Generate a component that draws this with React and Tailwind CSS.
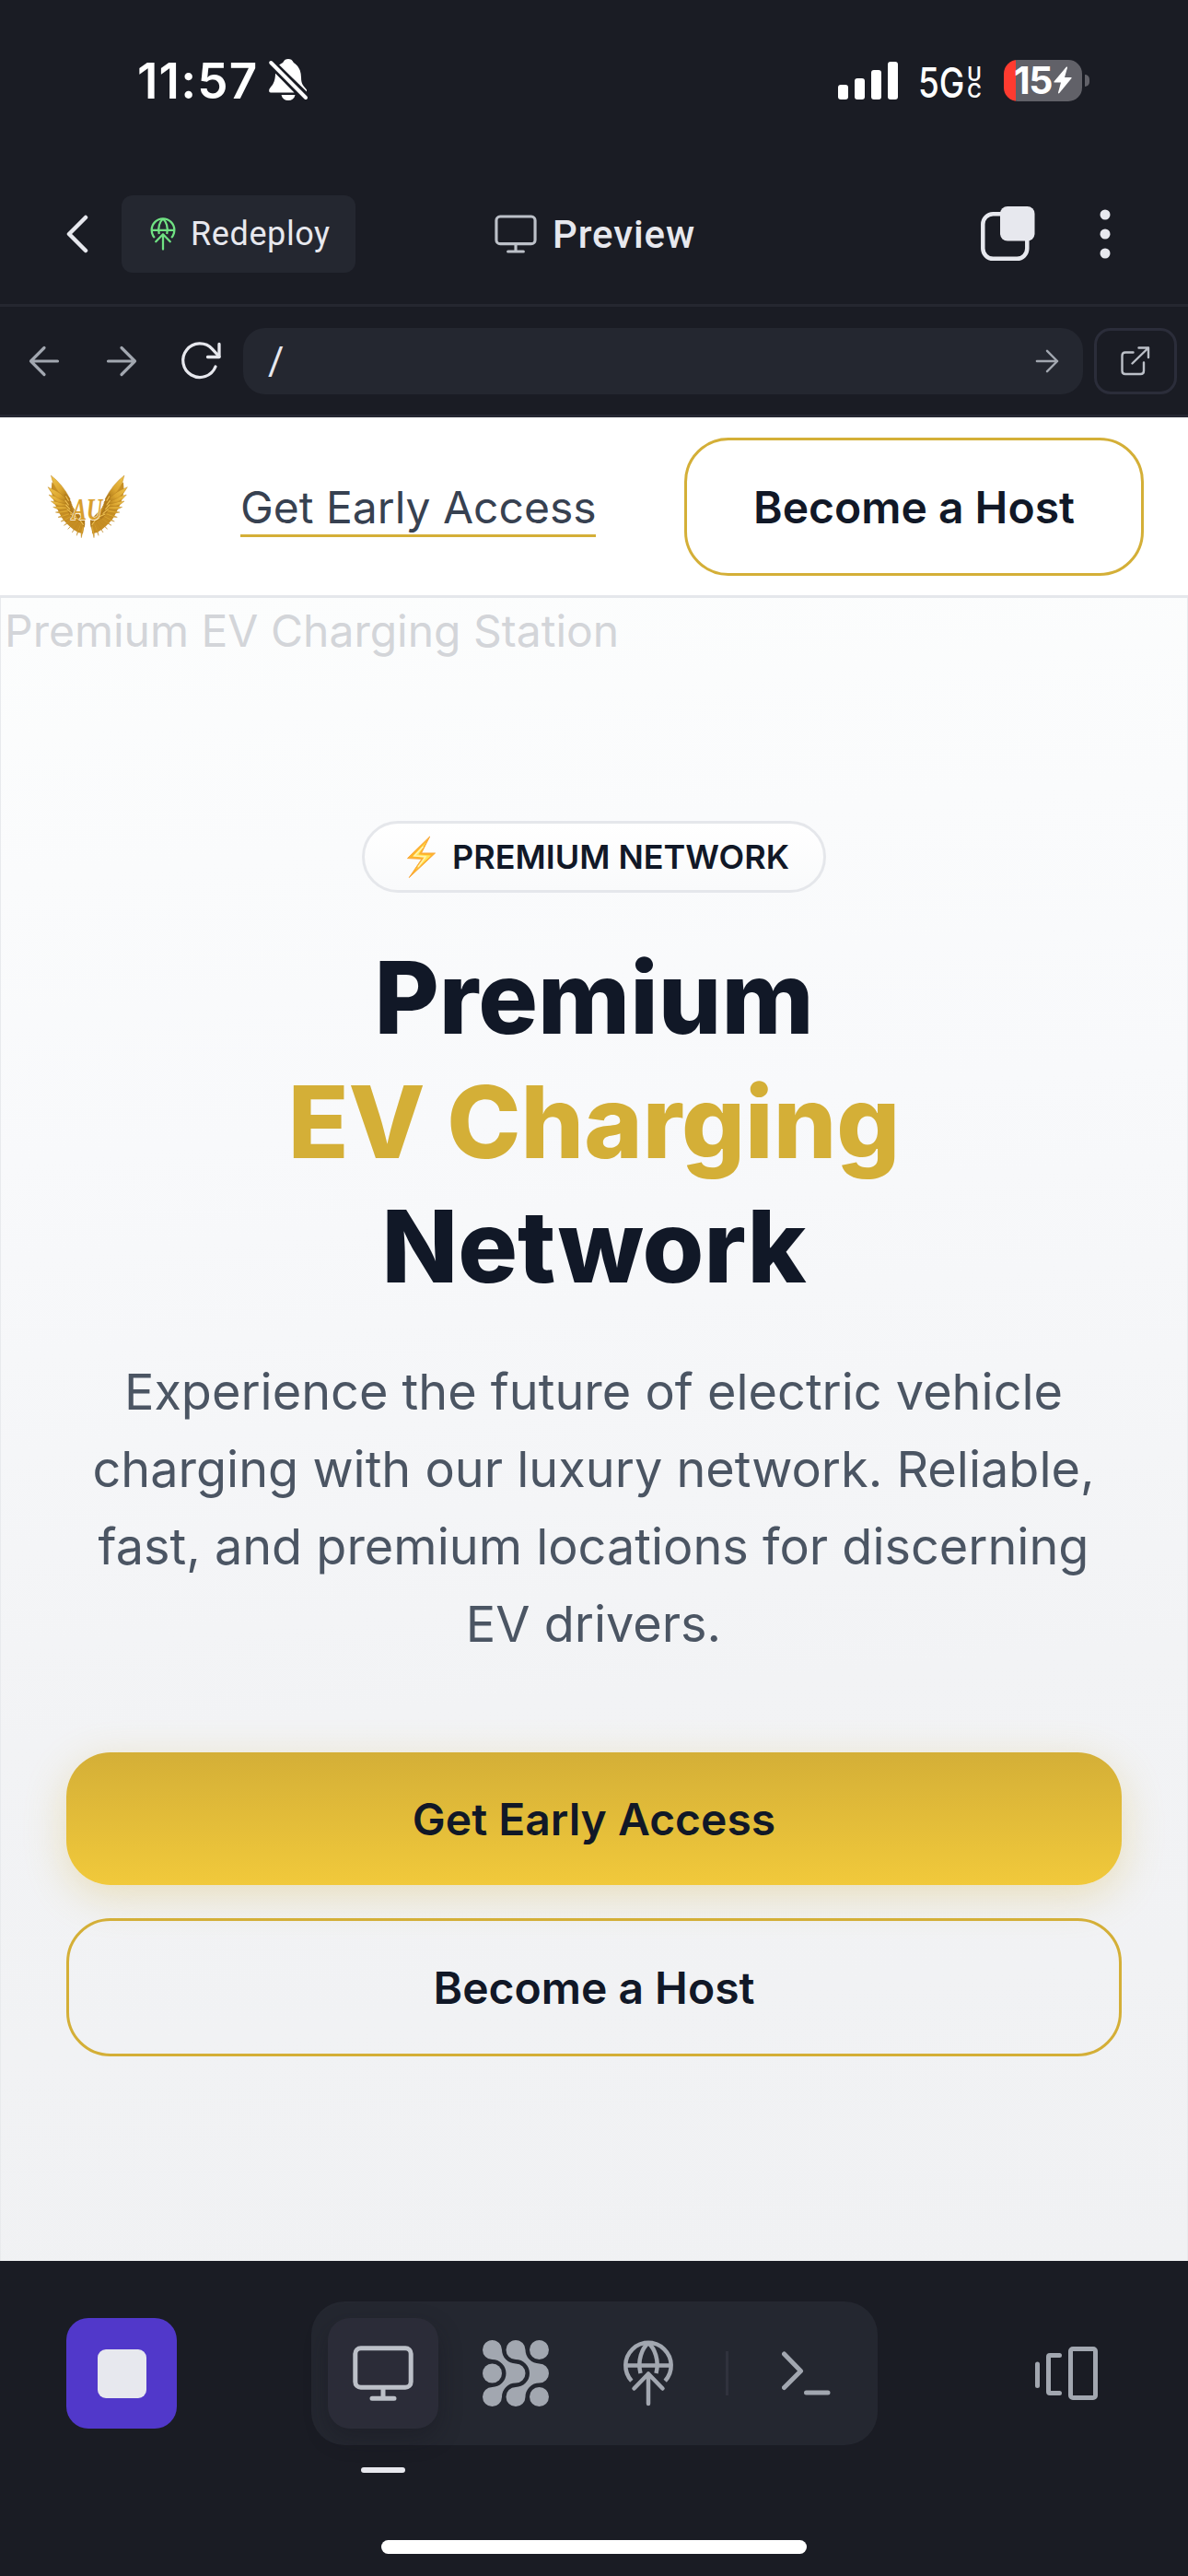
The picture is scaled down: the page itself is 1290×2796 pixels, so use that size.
import React from "react";

const INTER = "font-['Inter','Liberation_Sans',sans-serif]";
const UI = "font-['Roboto','Liberation_Sans',sans-serif]";

function BellOff() {
  return (
    <svg width="44" height="48" viewBox="0 0 44 48" fill="#fff" className="shrink-0">
      <path d="M12 7.5C14.5 6 15.500 5.500 16.500 4.500C17.500 2 19.500 1 22 1C24.500 1 26.500 2 27.500 4.500C28.500 6 36 9 36 21C36 29 39 30.500 42 34.500V36.500Z" />
      <path d="M8 16.500L28.500 37.500H3C1.500 37.500 1 36.500 1.200 35C1.800 31 8 29.500 8 16.500Z" />
      <path d="M14.500 40H29.500C28.500 44 26 46 22 46C18 46 15.500 44 14.500 40Z" />
      <path d="M3.200 5L41 43" stroke="#1a1c24" strokeWidth="9" />
      <path d="M3.200 5L41 43" stroke="#fff" strokeWidth="4" strokeLinecap="round" />
    </svg>
  );
}

function StatusBar() {
  return (
    <div className={`${INTER} flex h-[178px] shrink-0 items-center justify-between pl-[149px] pr-[107px] pb-[4px] text-white`}>
      <div className="flex items-center">
        <span className="w-[142px] whitespace-nowrap pt-[2px] text-[53px] font-semibold leading-none tracking-[1.200px]">11:57</span>
        <BellOff />
      </div>
      <div className="flex items-center">
        <div className="flex h-[41px] items-end gap-[7px]">
          <i className="h-[16px] w-[11px] rounded-[3px] bg-white" />
          <i className="h-[23px] w-[11px] rounded-[3px] bg-white" />
          <i className="h-[32px] w-[11px] rounded-[3px] bg-white" />
          <i className="h-[41px] w-[11px] rounded-[3px] bg-white" />
        </div>
        <div className="ml-[22px] flex h-[45px] w-[93px] items-center">
          <span className="w-[53px] origin-left scale-x-[0.82] whitespace-nowrap pt-[4px] text-[45px] font-medium leading-none">5G</span>
          <span className="w-[16px] pt-[5px] text-center text-[21px] font-semibold leading-[18px]">
            U<br />C
          </span>
        </div>
        <div className="flex h-[45px] w-[85px] items-center justify-center gap-[2px] rounded-[15px] bg-[linear-gradient(to_right,#ff3b30_13px,#616168_13px)]">
          <span className="text-[41px] font-bold leading-none tracking-[-1.500px]">15</span>
          <svg width="20" height="30" viewBox="0 0 20 30" fill="#fff">
            <path d="M14 0.500L0.500 16.500Q0 17.500 1 17.500H8L5 28.500Q5 30 6.300 29L19.500 13Q20 12 19 12H12L15 1.500Q15.200 0 14 0.500Z" />
          </svg>
        </div>
        <i className="ml-[3px] h-[13px] w-[5px] rounded-r-full bg-[#616168]" />
      </div>
    </div>
  );
}

function GlobeUp({ width, height, color, stroke }) {
  return (
    <svg width={width} height={height} viewBox="0 0 56 72" fill="none" stroke={color} strokeWidth={stroke} strokeLinecap="round" strokeLinejoin="round">
      <path strokeLinecap="butt" d="M9.800 44.200A24.700 24.700 0 1 1 46.200 44.200M3.300 27.500H52.700" />
      <path strokeLinecap="butt" d="M28 3C21 9 16 22 19.500 36M28 3C35 9 40 22 36.500 36" />
      <path d="M28 69V36.500M12.500 52.500L28 36.500L43.500 52.500" />
    </svg>
  );
}

function Monitor({ width, height, color, stroke }) {
  return (
    <svg width={width} height={height} viewBox="0 0 66 60" fill="none" stroke={color} strokeWidth={stroke} strokeLinecap="round" strokeLinejoin="round">
      <rect x="2.800" y="2.800" width="60.400" height="42.500" rx="6" />
      <path d="M33 46V57.200M21 57.200H45" />
    </svg>
  );
}

function Header() {
  return (
    <div className={`${UI} flex h-[155px] shrink-0 items-center border-b-[3px] border-[#252730] pl-[72px] text-[#e7e8ee]`}>
      <svg width="24" height="42" viewBox="0 0 24 42" fill="none" stroke="#e7e8ee" strokeWidth="4.500" strokeLinecap="round" strokeLinejoin="round">
        <path d="M21 3L3 21L21 39" />
      </svg>
      <button className="ml-[36px] flex h-[84px] w-[254px] items-center rounded-[12px] bg-[#242730] pl-[31px]">
        <GlobeUp width={28} height={36} color="#70e283" stroke={4.5} />
        <span className="ml-[16px] text-[36px] leading-none tracking-[0.600px]">Redeploy</span>
      </button>
      <div className="ml-[151px] flex items-center">
        <Monitor width={46} height={42} color="#bcc0c8" stroke={4.5} />
        <span className="ml-[17px] w-[156px] whitespace-nowrap pt-[2px] text-[42px] font-medium leading-none tracking-[0.900px]">Preview</span>
      </div>
      <svg className="ml-[309px]" width="60" height="60" viewBox="0 0 60 60">
        <rect x="2.300" y="8.300" width="48" height="48.500" rx="11" fill="none" stroke="#e7e8ee" strokeWidth="4.500" />
        <rect x="21" y="0" width="37.500" height="37.500" rx="8" fill="#e7e8ee" />
      </svg>
      <svg className="ml-[69px]" width="12" height="54" viewBox="0 0 12 54" fill="#e7e8ee">
        <circle cx="6" cy="6" r="5.500" />
        <circle cx="6" cy="27" r="5.500" />
        <circle cx="6" cy="48" r="5.500" />
      </svg>
    </div>
  );
}

function Arrow({ size, flip }) {
  return (
    <svg width={size} height={size} viewBox="0 0 34 34" fill="none" stroke="#a2a7b0" strokeWidth="3.200" strokeLinecap="round" strokeLinejoin="round" className={flip ? "-scale-x-100" : ""}>
      <path d="M2.500 17H31.500M17 2.500L31.500 17L17 31.500" />
    </svg>
  );
}

function AddressBar() {
  return (
    <div className="flex h-[120px] shrink-0 items-center border-b-[3px] border-[#252732] pl-[31px] pr-[12px]">
      <Arrow size={34} flip />
      <div className="ml-[50px]">
        <Arrow size={34} />
      </div>
      <svg className="ml-[46px]" width="46" height="46" viewBox="0 0 46 46" fill="none" stroke="#e7e8ee" strokeWidth="3.300" strokeLinecap="round" strokeLinejoin="round">
        <path d="M39 29A18.300 18.300 0 1 1 35.500 9.800L43 18" />
        <path d="M43 4.500V18.500H30.500" />
      </svg>
      <div className="ml-[23px] flex h-[72px] flex-1 items-center justify-between rounded-[24px] bg-[#242730] pl-[27px] pr-[26px]">
        <span className={`${UI} origin-left text-[42px] leading-none text-[#e7e8ee]`}>/</span>
        <Arrow size={26} />
      </div>
      <button className="ml-[12px] flex h-[72px] w-[90px] items-center justify-center rounded-[18px] border-[3px] border-[#2b2d3a]">
        <svg width="32" height="32" viewBox="0 0 32 32" fill="none" stroke="#bcc0c8" strokeWidth="2.400" strokeLinecap="round" strokeLinejoin="round">
          <path d="M13.500 6.500H5Q1.500 6.500 1.500 10V26.500Q1.500 30 5 30H21.500Q25 30 25 26.500V17.500" />
          <path d="M12.500 18.500L30 1.500M19.500 1.500H30V12" />
        </svg>
      </button>
    </div>
  );
}

/* Feathers of the left wing: tip x, tip y, root x, root y, width */
const FEATHERS = [
  [148, 247, 158, 190, 12], [133, 240, 152, 188, 12], [118, 230, 148, 184, 12],
  [104, 219, 142, 180, 12], [91, 207, 136, 174, 12], [81, 194, 132, 168, 12],
  [72, 180, 128, 162, 12], [64, 164, 126, 156, 12], [56, 147, 122, 150, 14],
  [49, 128, 120, 144, 16], [42, 107, 118, 138, 18], [39, 82, 116, 132, 20],
  [49, 44, 112, 122, 24],
];

function Wing() {
  return (
    <g>
      <path d="M52 66L100 108L122 150L160 190L153 234L138 230L122 220L108 208L96 196L86 184L78 170L70 154L62 138L56 120L50 96Z" fill="#c68e24" />
      {FEATHERS.map(([tx, ty, rx, ry, w]) => (
        <path
          key={ty}
          d={`M${tx} ${ty}Q${(tx + rx) / 2 - w * 0.8} ${(ty + ry) / 2 + w} ${rx} ${ry}Q${(tx + rx) / 2 + w * 0.3} ${(ty + ry) / 2 - w * 0.4} ${tx} ${ty}Z`}
          fill="url(#gold)"
          stroke="#b9801f"
          strokeWidth="1.200"
        />
      ))}
      <path d="M94 104Q116 114 116 148Q122 170 150 178Q164 190 158 214Q146 192 124 186Q96 168 94 104Z" fill="#b27b1c" />
      <path d="M98 112L106 126M96 126L106 140M98 140L110 154M102 154L118 168M112 170L130 178M130 182L146 192M142 188L154 204" fill="none" stroke="#efc253" strokeWidth="3.500" strokeLinecap="round" />
    </g>
  );
}

function WingsLogo() {
  return (
    <svg width="90" height="72" viewBox="36 38 270 216" className="shrink-0">
      <defs>
        <linearGradient id="gold" x1="0" y1="0" x2="1" y2="1">
          <stop offset="0" stopColor="#f0c44c" />
          <stop offset="0.550" stopColor="#dba52f" />
          <stop offset="1" stopColor="#a06c14" />
        </linearGradient>
      </defs>
      <Wing />
      <g transform="translate(337 0) scale(-1 1)">
        <Wing />
      </g>
      <text x="118" y="187" fontFamily="Liberation Serif, serif" fontStyle="italic" fontWeight="bold" fontSize="100" textLength="98" lengthAdjust="spacingAndGlyphs" fill="#d89e2c" stroke="#fff8e6" strokeWidth="5" paintOrder="stroke">AU</text>
    </svg>
  );
}

function SiteNav() {
  return (
    <div className={`${INTER} flex h-[196px] shrink-0 items-center border-b-[3px] border-[#e5e7eb] bg-white pl-[51px] pr-[48px] text-[48px]`}>
      <WingsLogo />
      <a className="ml-[120px] mt-[5px] h-[62px] w-[386px] whitespace-nowrap border-b-[3px] border-[#d4af37] leading-[59px] text-[#374151]">Get Early Access</a>
      <button className="ml-auto h-[150px] w-[499px] rounded-[48px] border-[3px] border-[#d4af37] pt-[2px] font-semibold text-[#111827]">Become a Host</button>
    </div>
  );
}

function BoltEmoji() {
  return (
    <svg width="33" height="47" viewBox="-1 -1 33 47" className="shrink-0">
      <path d="M24.700 0L0.500 23.600L16 24.300L2.300 44.500L30.500 18L15.500 18Z" fill="#ffb52b" stroke="#f9a83a" strokeWidth="1" strokeLinejoin="round" />
      <path d="M21 5.500L6 21.500L19.500 22.500L9 36.500L26 20.500L12.500 19.500Z" fill="#ffe65a" />
      <path d="M17.500 11L8 21L20 22L12 33" fill="none" stroke="#fff3b0" strokeWidth="1.500" />
    </svg>
  );
}

function Hero() {
  return (
    <div className={`${INTER} flex h-[1805px] shrink-0 flex-col items-center border-x border-[#e8eaed] bg-[linear-gradient(175deg,#fcfdfd_0%,#f8f9fb_32%,#f2f3f5_65%,#f0f1f3_100%)] text-center text-[#111827]`}>
      <p className="self-start pl-[4px] text-[48px] leading-[72px] text-[#d3d5d9]">Premium EV Charging Station</p>
      <div className="mt-[170px] flex h-[78px] w-[504px] items-center justify-center rounded-[39px] border-[3px] border-[#e5e7eb] bg-[linear-gradient(to_bottom,#ffffff,#f9fafb)] pl-[8px]">
        <BoltEmoji />
        <span className="ml-[17px] text-[36px] font-semibold leading-none">PREMIUM NETWORK</span>
      </div>
      <h1 className="mt-[46px] text-[108px] font-extrabold leading-[135px]">
        Premium
        <br />
        <span className="text-[#d4af37]">EV Charging</span>
        <br />
        Network
      </h1>
      <p className="mt-[49px] whitespace-nowrap pr-[1px] text-[54px] leading-[84px] text-[#4b5563]">
        Experience the future of electric vehicle
        <br />
        charging with our luxury network. Reliable,
        <br />
        fast, and premium locations for discerning
        <br />
        EV drivers.
      </p>
      <button className="mt-[97px] h-[144px] w-[1146px] shrink-0 rounded-[48px] bg-[linear-gradient(to_bottom,#d4af37,#f1c93b)] pt-[1px] text-[48px] font-semibold shadow-[0_12px_45px_rgba(212,175,55,0.3)]">Get Early Access</button>
      <button className="mt-[36px] h-[150px] w-[1146px] shrink-0 rounded-[48px] border-[3px] border-[#d4af37] pt-[1px] text-[48px] font-semibold">Become a Host</button>
    </div>
  );
}

function FlowDots() {
  const shape = "M10.500 0A10.500 10.500 0 0 1 21 10.500A15 15 0 0 0 36 25.500A10.500 10.500 0 0 1 36 46.500A15 15 0 0 0 21 61.500A10.500 10.500 0 1 1 10.500 51A15 15 0 0 0 10.500 21A10.500 10.500 0 0 1 10.500 0Z";
  return (
    <svg width="72" height="72" viewBox="0 0 72 72" fill="#a2a7b0">
      <path d={shape} />
      <path d={shape} transform="translate(25.500 0)" />
      <circle cx="61.500" cy="10.500" r="10.500" />
      <circle cx="10.500" cy="36" r="10.500" />
      <circle cx="61.500" cy="61.500" r="10.500" />
    </svg>
  );
}

function BottomBar() {
  return (
    <div className="flex h-[342px] shrink-0 flex-col">
      <div className="mt-[44px] flex h-[156px] items-center pl-[72px]">
        <button className="flex size-[120px] items-center justify-center rounded-[24px] bg-[#5138ca]">
          <i className="size-[53px] rounded-[9px] bg-[#e7e8ee]" />
        </button>
        <div className="ml-[146px] flex h-[156px] w-[615px] items-center rounded-[36px] bg-[#242730] pl-[18px]">
          <div className="flex size-[120px] items-center justify-center rounded-[24px] bg-[#2b2c38] shadow-[0_10px_24px_rgba(20,20,30,0.35)]">
            <Monitor width={66} height={60} color="#bcc0c8" stroke={5} />
          </div>
          <div className="ml-[48px]">
            <FlowDots />
          </div>
          <div className="ml-[80px]">
            <GlobeUp width={56} height={72} color="#a2a7b0" stroke={4.5} />
          </div>
          <i className="ml-[56px] h-[48px] w-[3px] bg-[#30323d]" />
          <svg className="ml-[58px]" width="54" height="48" viewBox="0 0 54 48" fill="none" stroke="#a2a7b0" strokeWidth="5" strokeLinecap="round" strokeLinejoin="round">
            <path d="M2.500 3L20.500 21.500L2.500 39.500M26.500 45H50" />
          </svg>
        </div>
        <svg className="ml-[170px]" width="70" height="60" viewBox="0 0 70 60" fill="none" stroke="#a2a7b0" strokeWidth="5" strokeLinecap="round" strokeLinejoin="round">
          <path d="M3.500 20V43.500M27.500 10.500H17Q15.500 10.500 15.500 12V50Q15.500 51.500 17 51.500H27.500" />
          <rect x="39.500" y="3.500" width="27" height="53" rx="2.500" />
        </svg>
      </div>
      <i className="ml-[392px] mt-[24px] h-[6px] w-[48px] rounded-[3px] bg-[#e7e8ee]" />
      <i className="ml-[414px] mt-[73px] h-[15px] w-[462px] rounded-full bg-white" />
    </div>
  );
}

export default function App() {
  return (
    <div className="flex h-[2796px] w-[1290px] flex-col overflow-hidden bg-[#1a1c24]">
      <StatusBar />
      <Header />
      <AddressBar />
      <SiteNav />
      <Hero />
      <BottomBar />
    </div>
  );
}
